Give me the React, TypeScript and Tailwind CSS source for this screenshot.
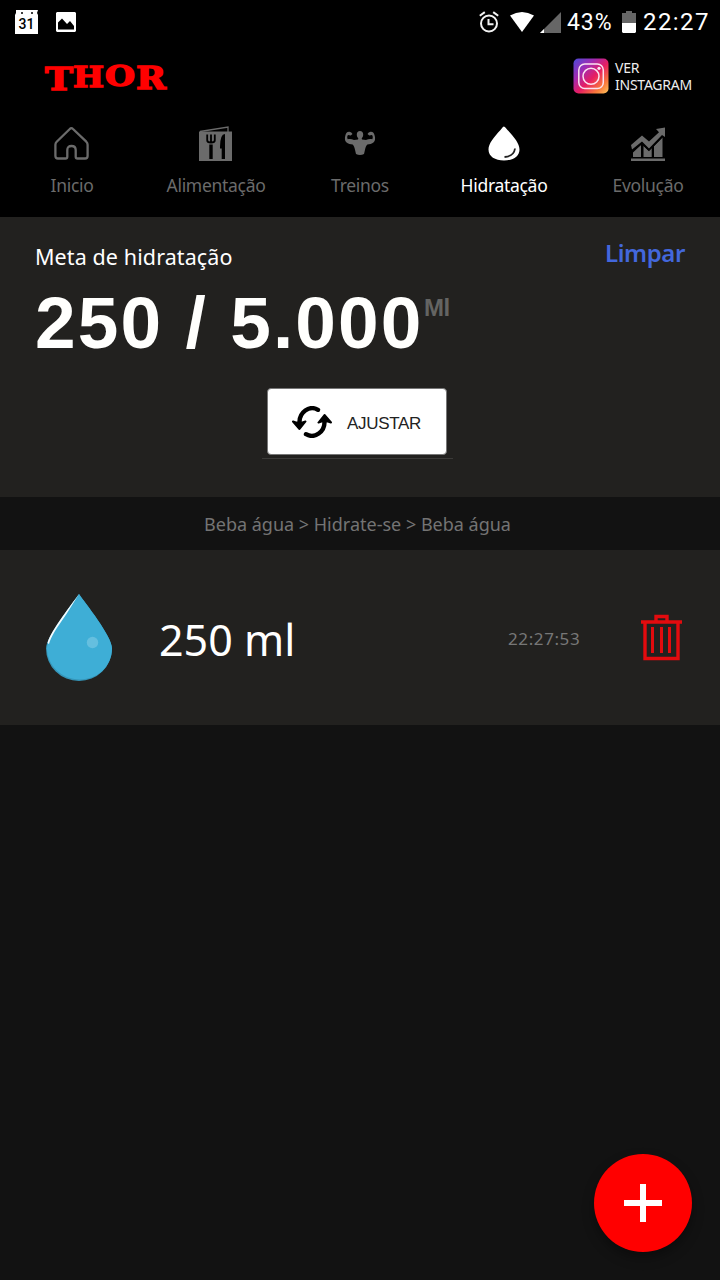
import type { ReactNode } from "react";

const textFont = "font-['Noto_Sans','Open_Sans',sans-serif]";

function StatusBar() {
  return (
    <div className="flex h-11 items-center justify-between pl-[15px] pr-[9px] text-white">
      <div className="flex items-center gap-[17px]">
        <svg width="24" height="26" viewBox="0 0 24 26">
          <path d="M1 1h22l-1 3 1 2v19H0V6l1-2z" fill="#fff" />
          <circle cx="7" cy="4" r="1" fill="#000" />
          <circle cx="17" cy="4" r="1" fill="#000" />
          <text x="11.5" y="20" textAnchor="middle" fontFamily="Roboto, sans-serif" fontSize="14" fontWeight="500" fill="#000">
            31
          </text>
        </svg>
        <svg width="20" height="20" viewBox="0 0 20 20">
          <path d="M1 0h18l1 1v18l-1 1H1l-1-1V1z" fill="#fff" />
          <path d="M2 17.500v-7l4-4 5 5.500 3-3 4 5v3.500z" fill="#000" />
        </svg>
      </div>
      <div className="flex items-center">
        <svg width="20" height="22" viewBox="0 0 20 22" fill="none" stroke="#f2f2f2" strokeWidth="2">
          <circle cx="10" cy="12.500" r="8" />
          <path d="M9.500 8v5.200h5M.8 4.800l5-3.700M19.200 4.800l-5-3.700" />
        </svg>
        <svg className="ml-[11px]" width="24" height="20" viewBox="0 0 24 20">
          <path d="M0 3.500Q12-3.500 24 3.500L12 20z" fill="#fff" />
        </svg>
        <svg className="ml-[6px]" width="21" height="21" viewBox="0 0 21 21">
          <path d="M0 21L21 0v21z" fill="#666" />
          <path d="M0 21l4-4v4z" fill="#fff" />
        </svg>
        <span className="ml-[6px] w-[47px] font-[Roboto,sans-serif] text-[23px] leading-none tracking-[0.9px]">43%</span>
        <svg className="ml-[8px]" width="14" height="22" viewBox="0 0 14 22">
          <path d="M0 2h4V0h6v2h4v10H0z" fill="#666" />
          <path d="M0 12h14v9l-1 1H1l-1-1z" fill="#fff" />
        </svg>
        <span className="ml-[7px] w-[68px] whitespace-nowrap font-[Roboto,sans-serif] text-[24px] leading-none tracking-[1.4px]">
          22:27
        </span>
      </div>
    </div>
  );
}

// the outer letters hang lower than the middle ones
const logoLetters = [
  { char: "T", x: 0, width: 28, size: 32, y: 33.5 },
  { char: "H", x: 28, width: 31, size: 28, y: 30.5 },
  { char: "O", x: 60, width: 30, size: 28, y: 30.2 },
  { char: "R", x: 91, width: 30, size: 31, y: 33 },
];

function Logo() {
  return (
    <svg width="124" height="40" viewBox="0 0 124 40" className="overflow-visible">
      {logoLetters.map((l) => (
        <text
          key={l.char}
          x={l.x}
          y={l.y}
          textLength={l.width}
          lengthAdjust="spacingAndGlyphs"
          fontFamily="'DejaVu Serif', serif"
          fontWeight="700"
          fontSize={l.size}
          fill="#f00"
          stroke="#f00"
          strokeWidth="1.4"
        >
          {l.char}
        </text>
      ))}
    </svg>
  );
}

function InstagramIcon() {
  return (
    <svg width="36" height="36" viewBox="0 0 36 36" fill="none">
      <defs>
        <linearGradient id="ig-base" x1="0" y1="0" x2="1" y2="1">
          <stop offset="0" stopColor="#4a4bd8" />
          <stop offset=".3" stopColor="#a02bb4" />
          <stop offset=".55" stopColor="#e71d62" />
          <stop offset=".8" stopColor="#f9793b" />
          <stop offset="1" stopColor="#fcc65c" />
        </linearGradient>
      </defs>
      <rect x=".5" y=".5" width="35" height="35" rx="5" fill="url(#ig-base)" />
      <rect x="5.800" y="6" width="24.500" height="24.500" rx="6" stroke="#fbe3f1" strokeWidth="1.500" />
      <circle cx="18" cy="18.300" r="8" stroke="#fbe3f1" strokeWidth="1.500" />
      <circle cx="26" cy="10.300" r="1.600" fill="#fbe3f1" />
    </svg>
  );
}

function HomeIcon() {
  return (
    <svg width="36" height="36" viewBox="0 0 36 36" fill="none" stroke="currentColor" strokeWidth="2.300" strokeLinejoin="round">
      <path d="M15.800 3Q17.300 1.300 19 3L32.300 15.700q1.300 1.300 1.300 3V30q0 2.500-2.500 2.500H23.500q-1.800 0-1.800-1.800V24q0-4-4.200-4t-4.200 4v6.700q0 1.800-1.800 1.800H3.900q-2.500 0-2.500-2.500V18.700q0-1.700 1.300-3z" />
    </svg>
  );
}

function MenuIcon() {
  return (
    <svg width="36" height="36" viewBox="0 0 36 36">
      <path d="M2 5.500L30 1v5" fill="none" stroke="currentColor" strokeWidth="1.300" />
      <path d="M1 5.500h33V35H1z" fill="currentColor" />
      <g fill="none" stroke="#000">
        <path d="M9.200 8.500v5.700q0 2.300 3.800 2.300t3.800-2.300V8.500M13 8.500V16" strokeWidth="1.800" />
        <path d="M13 18.500V33" strokeWidth="3.400" />
      </g>
      <path d="M22 21q0-13 5-13v25h-3.300V22.500H22z" fill="#000" />
    </svg>
  );
}

function MuscleIcon() {
  return (
    <svg width="36" height="36" viewBox="0 0 36 36" fill="currentColor">
      <path d="M18 5c2 0 3.200 1.400 3.200 3.500 0 1.700-.6 3-1.500 3.700l.3 1.300 4 .4c2.200-.8 4-1 6.300-.6.7-1.700.7-3-.3-4.200l-2.700.5L25.500 8q1-2 3-2.200c2.500-.2 3.500 1.200 4.200 4 .7 2.500.5 5-1 6.500-1.700 1.700-4.500 2-6.300 2.300-1.300 1.200-2 3-2.400 5.200L22 28q-4 2-8 0l-1-4.200c-.4-2.200-1.100-4-2.400-5.200-1.800-.3-4.600-.6-6.300-2.300-1.500-1.500-1.700-4-1-6.500.7-2.800 1.700-4.200 4.200-4q2 .2 3 2.200L8.700 9.600 6 9.100c-1 1.200-1 2.500-.3 4.200 2.300-.4 4.100-.2 6.300.6l4-.4.300-1.300c-.9-.7-1.500-2-1.500-3.700C14.800 6.400 16 5 18 5z" />
    </svg>
  );
}

function DropIcon() {
  return (
    <svg width="36" height="36" viewBox="0 0 36 36">
      <path d="M18 .5q1 .3 3.500 3.500C28 11 33.500 17.500 33.500 23.500c0 7-6.500 11-15.500 11s-15.500-4-15.500-11C2.500 17.500 8 11 14.500 4 17 .8 17 .8 18 .5z" fill="#fff" />
      <path d="M29 22.500q-1 7.800-10.500 8.500" fill="none" stroke="#222" strokeWidth="1.800" />
    </svg>
  );
}

function ChartIcon() {
  return (
    <svg width="36" height="36" viewBox="0 0 36 36" fill="currentColor">
      <path d="M1 32.500h34V35H1zM3 26.500l8-7.500v12H3zM13.500 20l5 4.800 3.200-3.200V31h-8.200zM24 20l8.500-8.500V31H24z" />
      <path d="M1 19L12 9.500l7 6L29 6.300 26 3l9-1.500V11l-3-2L19 22.500l-7-7L2 23.500z" />
      <path d="M2 25.300l10-8 7 7L32 11" fill="none" stroke="#000" strokeWidth="1.200" />
    </svg>
  );
}

type Tab = { label: string; icon: ReactNode; active?: boolean };

const tabs: Tab[] = [
  { label: "Inicio", icon: <HomeIcon /> },
  { label: "Alimentação", icon: <MenuIcon /> },
  { label: "Treinos", icon: <MuscleIcon /> },
  { label: "Hidratação", icon: <DropIcon />, active: true },
  { label: "Evolução", icon: <ChartIcon /> },
];

function TabBar() {
  return (
    <nav className="grid h-[109px] grid-cols-5 pt-[18px]">
      {tabs.map((tab) => (
        <div
          key={tab.label}
          className={`flex flex-col items-center whitespace-nowrap ${tab.active ? "text-white" : "text-[#6b6b6b]"}`}
        >
          {tab.icon}
          <span className="mt-[11px] text-[17.500px] leading-6 tracking-[-0.3px]">{tab.label}</span>
        </div>
      ))}
    </nav>
  );
}

function Goal() {
  return (
    <section className="flex h-[280px] flex-col bg-[#22211f] pl-[35px] pr-[35px]">
      <div className="flex h-[67px] items-start justify-between">
        <h1 className="pt-[26px] text-[21.500px] leading-7 tracking-[0.1px] text-white">Meta de hidratação</h1>
        <button className="pt-[21px] text-[24px] font-semibold leading-[30px] tracking-[-0.4px] text-[#4367dc]">Limpar</button>
      </div>
      <div className="flex h-[94px] items-start whitespace-nowrap font-bold">
        <span className="w-[389px] font-['Liberation_Sans',sans-serif] text-[73px] leading-[78px] tracking-[2.1px] text-[#fffffd]">250 / 5.000</span>
        <sup className="top-0 pt-[10px] font-['Liberation_Sans',sans-serif] text-[24px] font-semibold leading-[28px] tracking-[-0.5px] text-[#646462]">Ml</sup>
      </div>
      <div className="ml-[227px] w-[191px] border-b border-[#3b3a38] pt-[10px] pb-[3px]">
        <button className="ml-[5px] flex h-[67px] w-[180px] items-center rounded-[4px] border border-[#777] bg-white pl-[24px] text-[#222]">
          <svg width="40" height="32" viewBox="0 0 40 32">
            <g fill="none" stroke="#000" strokeWidth="4.400" strokeLinecap="round">
              <path d="M7.500 17A12.700 14 0 0 1 26 3.800" />
              <path d="M32.500 15A12.700 14 0 0 1 14 28.200" />
            </g>
            <path d="M1 15.500q6 2.500 12.500 0L7.500 23zM26.500 16.500q6-2.500 12.500 0L32.500 9z" stroke="#000" strokeWidth="2" strokeLinejoin="round" />
          </svg>
          <span className="ml-[15px] pt-[5px] font-['Liberation_Sans',sans-serif] text-[17px] tracking-[-0.3px]">AJUSTAR</span>
        </button>
      </div>
    </section>
  );
}

function Entry({ amount, time }: { amount: string; time: string }) {
  return (
    <div className="flex h-[175px] items-center bg-[#22211f] pl-[45px] pr-[37px]">
      <svg width="68" height="88" viewBox="0 0 68 88">
        <path d="M34 0C28 9 1 42 1 54.500a33 32.500 0 0 0 66 0C67 42 40 9 34 0z" fill="#3595b8" />
        <path d="M34 0C28 9 2 42 2 54.500c0 16 14 31 33 31 18 0 32-14 32-31C67 42 40 9 34 0z" fill="#3eaed6" />
        <path d="M34 0C27 10 6 36 2.500 49l1.500 1C6 43 11 35 17 26.500 23 18 29 8 34 0z" fill="#f4fbfd" />
        <circle cx="47.500" cy="48.500" r="5.700" fill="#65bfdf" />
      </svg>
      <span className="ml-[46px] w-[240px] whitespace-nowrap pt-1 text-[43px] leading-[60px] text-white">{amount}</span>
      <span className="ml-[109px] w-[75px] whitespace-nowrap pt-[2px] text-[17px] leading-6 tracking-[0.6px] text-[#777]">{time}</span>
      <svg className="ml-auto" width="42" height="48" viewBox="0 0 42 48" fill="none" stroke="#e30b0e">
        <path d="M0 8h41M15 8V2.500h11V8M4 8v36.500h33V8" strokeWidth="3.400" />
        <path d="M11.500 13v26M20.500 13v26M28.500 13v26" strokeWidth="3" />
      </svg>
    </div>
  );
}

export default function App() {
  return (
    <main className={`relative flex h-[1280px] w-[720px] flex-col overflow-hidden bg-[#121212] ${textFont}`}>
      <header className="h-[217px] bg-black">
        <StatusBar />
        <div className="flex h-[64px] items-center justify-between pl-[45px] pr-[28px]">
          <Logo />
          <div className="flex items-center gap-[6px]">
            <InstagramIcon />
            <div className="w-[77px] whitespace-nowrap pt-px font-['Noto_Sans',sans-serif] text-[14px] leading-[16.500px] tracking-[-0.25px] text-[#eee]">
              VER
              <br />
              INSTAGRAM
            </div>
          </div>
        </div>
        <TabBar />
      </header>
      <Goal />
      <div className="flex h-[53px] items-center justify-center pt-[2px] pr-[5px] text-[18px] text-[#747474]">
        Beba água &gt; Hidrate-se &gt; Beba água
      </div>
      <Entry amount="250 ml" time="22:27:53" />
      <button className="absolute bottom-[28px] right-[28px] flex size-[98px] items-center justify-center rounded-full bg-[#f00] shadow-[0_6px_12px_rgba(0,0,0,0.35)]">
        <svg width="38" height="38" viewBox="0 0 38 38">
          <path d="M16 0h6v16h16v6H22v16h-6V22H0v-6h16z" fill="#fff" />
        </svg>
      </button>
    </main>
  );
}
